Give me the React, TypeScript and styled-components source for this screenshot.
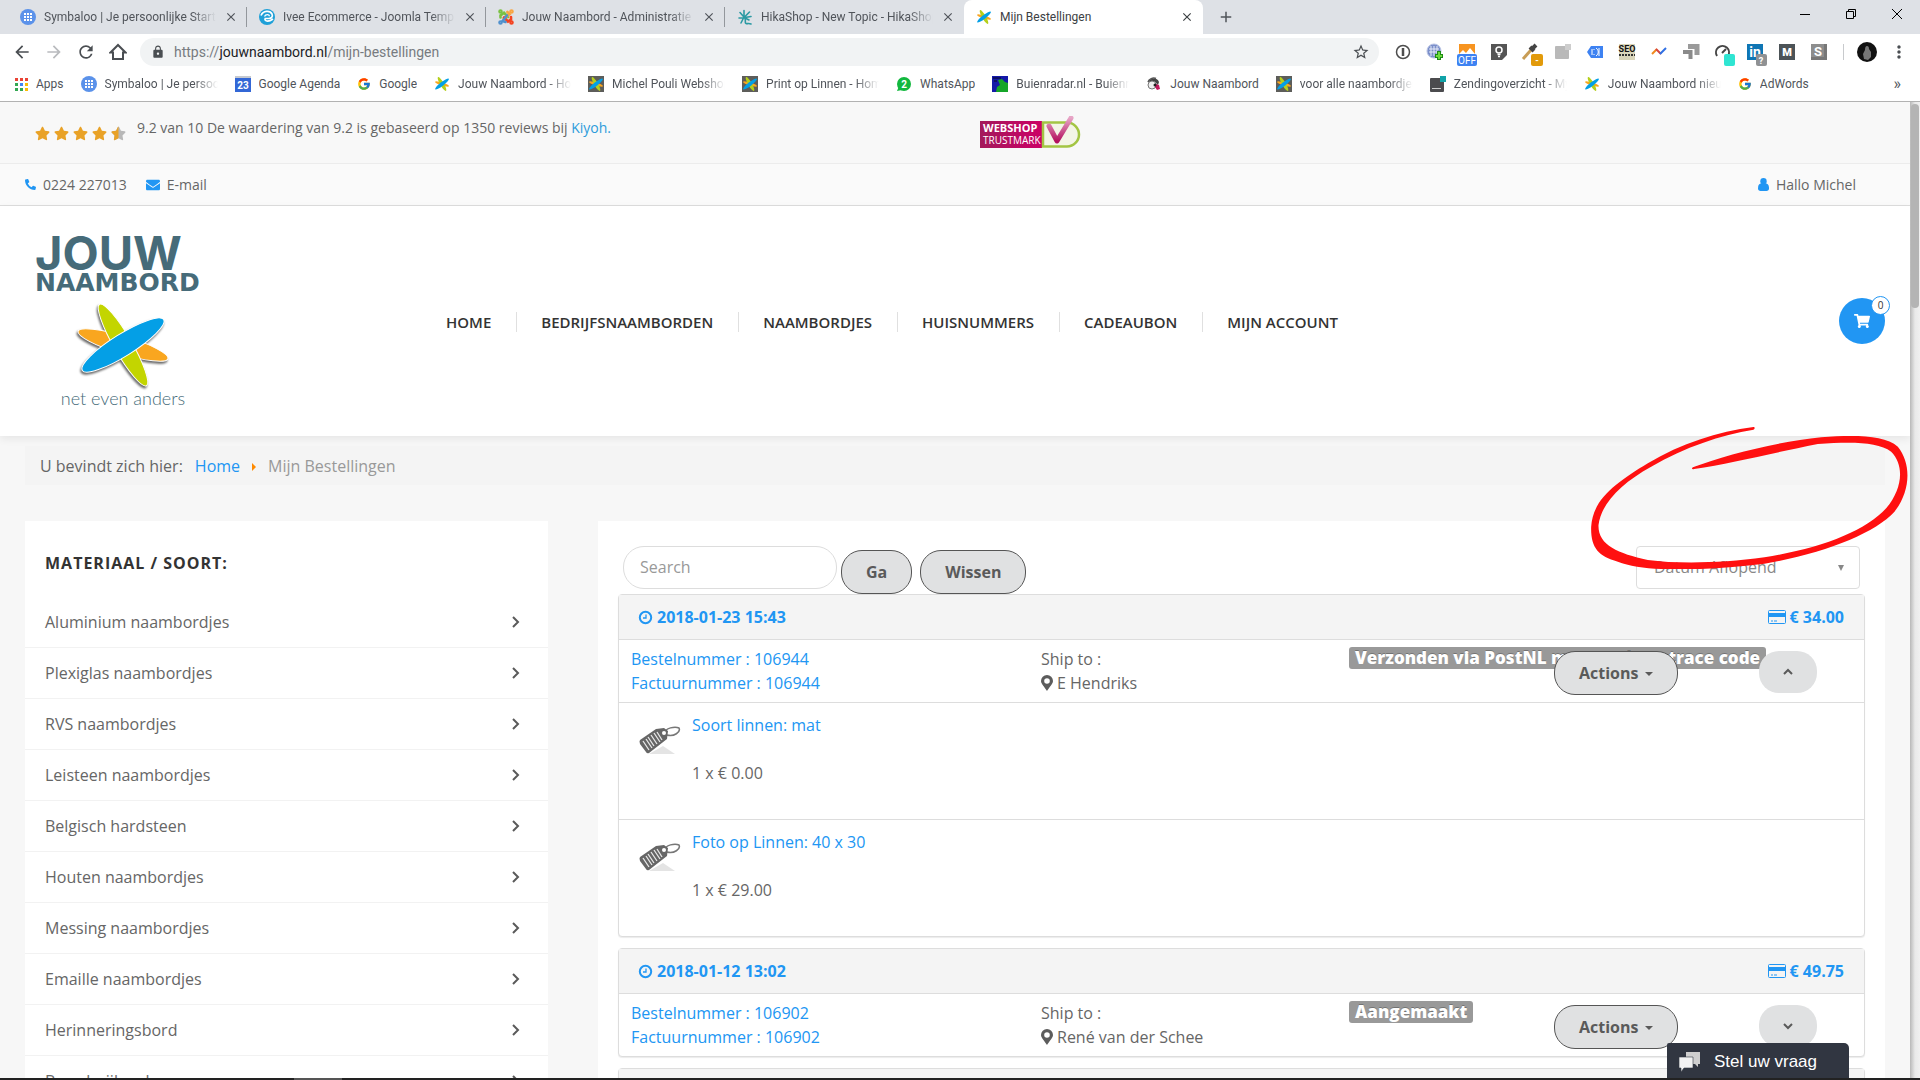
import React from 'react';
import styled, { createGlobalStyle } from 'styled-components';
import {
  MdAdd,
  MdArrowBack,
  MdArrowForward,
  MdClose,
  MdLock,
  MdMoreVert,
  MdRefresh,
  MdStarBorder,
} from 'react-icons/md';
import { FcGoogle } from 'react-icons/fc';
import { FaEnvelope, FaPhoneAlt, FaShoppingCart, FaStar, FaStarHalf } from 'react-icons/fa';

const blue = '#2196f3';
const line = '#dddddd';
const siteFont = '"Open Sans", "Noto Sans", sans-serif';
const chromeFont = 'Roboto, "Open Sans", sans-serif';

const Global = createGlobalStyle`
  *, *::before, *::after { box-sizing: border-box; }
  body { margin: 0; background: #f7f7f7; }
  a { color: inherit; text-decoration: none; }
  button, input, select { font: inherit; color: inherit; margin: 0; }
  button { cursor: pointer; }
  ul { list-style: none; margin: 0; padding: 0; }
  p, h1, h2, h3 { margin: 0; }
  svg { display: block; flex: none; }
`;

/* ---------- Browser window ---------- */

const Window = styled.div`
  display: flex;
  flex-direction: column;
  height: 100vh;
  overflow: hidden;
  font-family: ${siteFont};
  font-size: 16px;
  line-height: 24px;
  color: #666;
`;

const TabStrip = styled.div`
  display: flex;
  flex: none;
  height: 34px;
  padding-left: 8px;
  background: #dee1e6;
  font: 12px/34px ${chromeFont};
  color: #50545a;
`;

const Tab = styled.div<{ $active?: boolean; $divider?: boolean }>`
  display: flex;
  align-items: center;
  gap: 8px;
  width: 239px;
  height: 34px;
  padding: 0 11px 0 12px;
  background: ${(p) => (p.$active ? '#fff' : 'transparent')};
  border-radius: 8px 8px 0 0;
  color: ${(p) => (p.$active ? '#3c4043' : 'inherit')};
  &::after {
    content: '';
    width: 1px;
    height: 20px;
    margin-right: -11px;
    background: ${(p) => (p.$divider ? '#93979c' : 'transparent')};
  }
`;

const Fade = styled.span<{ $fade?: boolean }>`
  overflow: hidden;
  white-space: nowrap;
  ${(p) =>
    p.$fade &&
    'mask-image: linear-gradient(to right, #000 calc(100% - 24px), transparent);'}
`;

const TabTitle = styled(Fade)`
  flex: 1;
`;

const PlainButton = styled.button`
  display: flex;
  align-items: center;
  justify-content: center;
  padding: 0;
  border: 0;
  background: none;
`;

const NewTab = styled(PlainButton)`
  width: 28px;
  margin-left: 9px;
`;

const WindowControls = styled.div`
  display: flex;
  align-items: center;
  gap: 30px;
  height: 28px;
  margin-left: auto;
  padding-right: 15px;
  color: #000;
`;

const Toolbar = styled.div`
  display: flex;
  flex: none;
  align-items: center;
  height: 36px;
  padding: 0 9px 0 12px;
  background: #fff;
  color: #4a4e52;
`;

const NavButtons = styled.div`
  display: flex;
  gap: 12px;
  margin-right: 12px;
`;

const NavButton = styled(PlainButton)<{ $off?: boolean }>`
  width: 20px;
  height: 20px;
  color: ${(p) => (p.$off ? '#b9bbbe' : '#4a4e52')};
`;

const AddressBar = styled.form`
  display: flex;
  flex: 1;
  align-items: center;
  gap: 9px;
  height: 28px;
  padding: 0 9px 0 11px;
  border-radius: 14px;
  background: #f1f3f4;
  font: 14px/28px ${chromeFont};
`;

const Url = styled.label`
  position: relative;
  flex: 1;
  color: #777b80;
  b {
    font-weight: 400;
    color: #202124;
  }
`;

const UrlInput = styled.input`
  position: absolute;
  inset: 0;
  width: 100%;
  border: 0;
  background: none;
  color: transparent;
`;

const Extensions = styled.div`
  display: flex;
  align-items: center;
  gap: 8px;
  margin: 0 0 0 12px;
`;

const Divider = styled.span`
  width: 1px;
  height: 16px;
  margin: 0 3px 0 4px;
  background: #c8cacd;
`;

const ExtensionButton = styled(PlainButton)`
  width: 24px;
  height: 28px;
`;

const Bookmarks = styled.nav`
  display: flex;
  flex: none;
  align-items: center;
  gap: 17px;
  height: 32px;
  padding: 0 19px 3px 12px;
  background: #fff;
  border-bottom: 1px solid #b2b2b2;
  font: 12px/28px ${chromeFont};
  color: #50545a;
`;

const Bookmark = styled.a`
  display: flex;
  align-items: center;
  gap: 8px;
  ${Fade} {
    max-width: 113px;
  }
`;

const More = styled(PlainButton)`
  margin-left: auto;
  font-size: 16px;
`;

/* ---------- Page ---------- */

const Viewport = styled.div`
  display: flex;
  flex: 1;
  min-height: 0;
  overflow: hidden;
`;

const Page = styled.div`
  flex: 1;
  min-width: 0;
  background: #f7f7f7;
`;

const ScrollTrack = styled.div`
  width: 10px;
  padding: 2px 1px;
  background: linear-gradient(to right, #b8b8b8, #e9e9e9 50%, #f0f0f0);
`;

const ScrollThumb = styled.div`
  height: 204px;
  border-radius: 4px;
  background: #b4b4b4;
`;

const BottomEdge = styled.div`
  flex: none;
  height: 2px;
  background: linear-gradient(to right, #222 294px, #555 294px, #555 342px, #222 342px);
`;

const ReviewBar = styled.div`
  display: grid;
  grid-template-columns: 945px 1fr;
  height: 62px;
  padding: 0 35px;
  background: #f8f8f8;
  border-bottom: 1px solid #ececec;
  font-size: 14px;
`;

const Rating = styled.div`
  display: flex;
  gap: 11px;
  padding-top: 14px;
  a {
    color: #2d9cdb;
  }
`;

const Stars = styled.span`
  display: flex;
  gap: 4px;
  height: 34px;
  align-items: center;
  color: #e9a227;
`;

const HalfStar = styled.span`
  display: grid;
  color: #b8b8b8;
  svg {
    grid-area: 1 / 1;
  }
  svg + svg {
    color: #e9a227;
  }
`;

const ContactBar = styled.div`
  display: flex;
  align-items: center;
  gap: 19px;
  height: 42px;
  padding: 0 54px 0 25px;
  background: #fafafa;
  border-bottom: 1px solid ${line};
  font-size: 14px;
`;

const Contact = styled.a<{ $end?: boolean }>`
  display: flex;
  align-items: center;
  gap: 7px;
  margin-left: ${(p) => (p.$end ? 'auto' : '0')};
  svg {
    color: ${blue};
  }
`;

const Header = styled.header`
  display: grid;
  grid-template-columns: 387px 1fr auto;
  align-items: center;
  height: 230px;
  padding: 0 25px 0 35px;
  background: #fff;
  box-shadow: 0 3px 8px rgba(0, 0, 0, 0.07);
`;

const Menu = styled.ul`
  display: flex;
  padding-top: 2px;
  font-size: 15px;
  line-height: 20px;
  font-weight: 600;
  color: #333;
  li {
    padding: 0 25px 0 24px;
  }
  li + li {
    border-left: 1px solid #e0e0e0;
  }
`;

const CartButton = styled.button`
  position: relative;
  display: flex;
  align-items: center;
  justify-content: center;
  width: 46px;
  height: 46px;
  padding: 0;
  border: 0;
  border-radius: 50%;
  background: ${blue};
  color: #fff;
`;

const CartCount = styled.span`
  position: absolute;
  top: -2px;
  right: -5px;
  width: 19px;
  height: 19px;
  border: 1px solid ${blue};
  border-radius: 50%;
  background: #fff;
  color: #333;
  font-size: 10px;
  line-height: 17px;
  text-align: center;
`;

const Content = styled.main`
  padding: 10px 25px 0;
`;

const Breadcrumb = styled.nav`
  display: flex;
  align-items: center;
  gap: 12px;
  height: 39px;
  padding: 0 15px;
  background: #f4f4f4;
  color: #999;
  span {
    color: #666;
  }
  a {
    color: ${blue};
  }
`;

const Columns = styled.div`
  display: grid;
  grid-template-columns: 523fr 1287fr;
  gap: 50px;
  margin-top: 36px;
`;

const Sidebar = styled.aside`
  background: #fff;
  padding-top: 30px;
`;

const SidebarTitle = styled.h3`
  padding: 0 20px;
  margin-bottom: 22px;
  font-size: 16px;
  line-height: 24px;
  font-weight: 700;
  letter-spacing: 1px;
  color: #333;
`;

const Category = styled.a`
  display: flex;
  align-items: center;
  justify-content: space-between;
  height: 51px;
  padding: 0 26px 0 20px;
  border-bottom: 1px solid #f2f2f2;
`;

const Orders = styled.section`
  position: relative;
  padding: 25px 20px 0;
  background: #fff;
`;

const Filters = styled.form`
  display: flex;
  align-items: flex-start;
  height: 48px;
  padding: 0 5px;
`;

const SearchInput = styled.input`
  width: 214px;
  height: 43px;
  margin-right: 4px;
  padding: 0 16px 2px;
  border: 1px solid ${line};
  border-radius: 21px;
  background: #fff;
  &::placeholder {
    color: #999;
    opacity: 1;
  }
`;

const PillButton = styled.button`
  height: 44px;
  margin: 4px 8px 0 0;
  padding: 0 24px;
  border: 1px solid #555;
  border-radius: 21px;
  background: #e0e1e2;
  color: #5a5a5a;
  font-weight: 700;
  white-space: nowrap;
`;

const SortSelect = styled.select`
  width: 224px;
  height: 43px;
  padding: 0 17px 2px;
  appearance: none;
  border: 1px solid ${line};
  border-radius: 4px;
  background: #fff;
  color: #888;
`;

const SortField = styled.div`
  display: grid;
  align-items: center;
  margin-left: auto;
  > * {
    grid-area: 1 / 1;
  }
  svg {
    justify-self: end;
    margin-right: 15px;
    pointer-events: none;
  }
`;

const OrderCard = styled.article`
  margin-bottom: 11px;
  border: 1px solid ${line};
  border-radius: 4px;
  box-shadow: 0 1px 1px rgba(0, 0, 0, 0.08);
  background: #fff;
`;

const OrderHead = styled.header`
  display: flex;
  align-items: center;
  justify-content: space-between;
  height: 45px;
  padding: 0 20px 0 19px;
  border-bottom: 1px solid ${line};
  background: #f4f4f4;
  color: ${blue};
  font-weight: 700;
`;

const IconText = styled.span`
  display: flex;
  align-items: center;
  gap: 4px;
`;

const OrderInfo = styled.div`
  display: grid;
  grid-template-columns: 410px 308px 205px 205px 1fr;
  padding: 7px 0 6px 12px;
  height: 62px;
`;

const OrderLinks = styled.div`
  display: flex;
  flex-direction: column;
  color: ${blue};
`;

const Status = styled.span`
  justify-self: start;
  align-self: start;
  padding: 0 6px;
  border-radius: 3px;
  background: #999;
  color: #fff;
  font-size: 17px;
  line-height: 22px;
  font-weight: 800;
  white-space: nowrap;
  text-shadow: 0 -1px 0 rgba(0, 0, 0, 0.25);
`;

const ActionsButton = styled(PillButton)`
  display: flex;
  align-items: center;
  gap: 7px;
  position: relative;
  justify-self: start;
`;

const ToggleButton = styled.button`
  position: relative;
  display: flex;
  align-items: center;
  justify-content: center;
  width: 58px;
  height: 42px;
  margin-top: 4px;
  padding: 0;
  border: 0;
  border-radius: 20px;
  background: #e0e1e2;
  color: #5a5a5a;
`;

const Product = styled.div`
  display: flex;
  gap: 11px;
  height: 117px;
  padding: 10px 20px;
  border-top: 1px solid ${line};
`;

const ProductText = styled.div`
  display: flex;
  flex-direction: column;
  gap: 24px;
  a {
    color: ${blue};
  }
`;

const Chat = styled.button`
  position: absolute;
  right: 71px;
  bottom: 2px;
  display: flex;
  align-items: center;
  gap: 14px;
  width: 182px;
  height: 35px;
  padding: 3px 12px 0;
  border: 0;
  border-radius: 2px 5px 0 0;
  background: #313641;
  color: #fff;
  font: 17px/32px "Liberation Sans", Arial, sans-serif;
`;

const Marker = styled.svg`
  position: absolute;
  top: -96px;
  right: -23px;
  pointer-events: none;
`;

const HiddenLabel = styled.label`
  position: absolute;
  width: 1px;
  height: 1px;
  overflow: hidden;
  clip-path: inset(50%);
`;

/* ---------- Drawings ---------- */

const Leaves = () => (
  <g stroke="#fff" strokeWidth="1">
    <ellipse cx="50" cy="45" rx="47" ry="9" fill="#f9a61f" transform="rotate(17 50 45)" />
    <ellipse cx="50" cy="45" rx="47" ry="9" fill="#c3d500" transform="rotate(60 50 45)" />
    <ellipse cx="50" cy="45" rx="48" ry="11" fill="#049fe6" transform="rotate(-32 50 45)" />
  </g>
);

const Flower = ({ dark }: { dark?: boolean }) => (
  <svg width="16" height="16" viewBox="0 0 100 100">
    {dark && <rect width="100" height="100" fill="#5d5d5a" />}
    <ellipse cx="50" cy="50" rx="46" ry="10" fill="#f9a61f" transform="rotate(17 50 50)" />
    <ellipse cx="50" cy="50" rx="50" ry="12" fill="#b5cf1c" transform="rotate(60 50 50)" />
    <ellipse cx="50" cy="50" rx="54" ry="12" fill="#049fe6" transform="rotate(-38 50 50)" />
  </svg>
);

const Symbaloo = () => (
  <svg width="16" height="16" viewBox="0 0 16 16">
    <circle cx="8" cy="8" r="8" fill="#5b92ea" />
    {[4, 7, 10].map((x) =>
      [4, 7, 10].map((y) => <rect key={`${x}-${y}`} x={x} y={y} width="2" height="2" fill="#fff" />),
    )}
  </svg>
);

const Swirl = () => (
  <svg width="16" height="16" viewBox="0 0 16 16">
    <circle cx="8" cy="8" r="8" fill="#1ea0d8" />
    <path d="M2 6.500c2-5 9-5.500 11-1.500 1.300 3-1 4.700-3.500 4.500H6.200C5 12 9 13.500 14 10" fill="none" stroke="#fff" strokeWidth="1.700" />
    <path d="M5.500 7.500c1-2.500 5-2.500 4.800-.2" fill="none" stroke="#fff" strokeWidth="1.300" />
  </svg>
);

const Joomla = () => (
  <svg width="16" height="16" viewBox="0 0 16 16" fill="none" strokeWidth="2.600" strokeLinecap="round">
    <path d="M2.500 8.500V6.500L6 3.800 10 8" stroke="#7ac143" />
    <path d="M8.500 2.800 11 4.500 6 10" stroke="#f9a541" transform="rotate(10 8 8)" />
    <path d="M13 8v2.500L10 12.500 6 8.500" stroke="#f44321" />
    <path d="M7.500 13 4.500 12 9 6.500" stroke="#5091cd" />
    <circle cx="2.500" cy="2.500" r="1" stroke="#7ac143" />
    <circle cx="13.500" cy="2.500" r="1" stroke="#f9a541" />
    <circle cx="13.500" cy="13.500" r="1" stroke="#f44321" />
    <circle cx="2.500" cy="13.500" r="1" stroke="#5091cd" />
  </svg>
);

const Hika = () => (
  <svg width="16" height="16" viewBox="0 0 16 16" fill="none" stroke="#2b9aa3" strokeWidth="1.600" strokeLinecap="round">
    <path d="M7 1.500v6M3 3.500l3.500 4M12.500 3 8 7.500M2 9h5M14 7.500 8 8.500M6.500 9 4 14M8 9c1 4-.5 5 1 5.500s2.500-.5 5 .5M9 9.500l3 1.500" />
  </svg>
);

const AppsGrid = () => (
  <svg width="16" height="16" viewBox="0 0 16 16">
    {['#ea4335', '#ea4335', '#ea4335', '#34a853', '#4285f4', '#fbbc05', '#34a853', '#34a853', '#fbbc05'].map((c, i) => (
      <rect key={i} x={3 + (i % 3) * 5} y={2 + Math.floor(i / 3) * 5} width="3" height="3" fill={c} />
    ))}
  </svg>
);

const Agenda = () => (
  <svg width="16" height="16" viewBox="0 0 16 16">
    <rect width="16" height="4" fill="#c5c9d0" />
    <rect y="2" width="16" height="14" fill="#3367d6" />
    <text x="8" y="13" textAnchor="middle" fontSize="10" fontWeight="700" fontFamily="Roboto, sans-serif" fill="#fff">23</text>
  </svg>
);

const WhatsApp = () => (
  <svg width="16" height="16" viewBox="0 0 16 16">
    <circle cx="8" cy="8" r="7" fill="#12b83e" />
    <path d="M1 15l2-5 3 4z" fill="#12b83e" />
    <text x="8" y="12" textAnchor="middle" fontSize="10" fontWeight="700" fontFamily="Roboto, sans-serif" fill="#fff">2</text>
  </svg>
);

const Radar = () => (
  <svg width="16" height="16" viewBox="0 0 16 16">
    <rect width="16" height="16" fill="#1419a8" />
    <path d="M6 4l4-1 3 3 3 1v9H4l1-5 3-2z" fill="#16a629" />
    <path d="M1 2h8M2 5h3" stroke="#0a0c50" strokeWidth="1.500" />
  </svg>
);

const Figure = () => (
  <svg width="16" height="16" viewBox="0 0 16 16">
    <path d="M2 6c2-4 9-5 11 0l-1 3-3-3z" fill="#444" />
    <circle cx="6" cy="9" r="4" fill="#eee" stroke="#777" />
    <path d="M10 8l3 1 1 4-3 1-2-3z" fill="#c2185b" />
    <circle cx="9" cy="9" r="1.500" fill="#222" />
    <path d="M2 6c1-3 5-5 8-3.500" fill="none" stroke="#555" strokeWidth="1.500" />
  </svg>
);

const Parcel = () => (
  <svg width="16" height="16" viewBox="0 0 16 16">
    <rect x="0" y="2" width="14" height="14" rx="1" fill="#4b4b4e" />
    <rect x="2" y="12" width="9" height="1" fill="#ccc" />
    <rect x="10" y="0" width="6" height="6" fill="#11a3a8" />
  </svg>
);

const HomeOutline = () => (
  <svg width="18" height="18" viewBox="0 0 18 18" fill="none" stroke="currentColor" strokeWidth="2">
    <path d="M1.500 9.500 9 2l7.500 7.500H14V16H4V9.500z" />
  </svg>
);

const SquareBase = ({ fill, children }: { fill: string; children?: React.ReactNode }) => (
  <svg width="24" height="28" viewBox="0 0 24 28">
    <rect x="4" y="6" width="16" height="16" fill={fill} />
    {children}
  </svg>
);

const glyph = { fontFamily: 'Roboto, sans-serif', fontWeight: 700, textAnchor: 'middle' as const, fill: '#fff' };

const extensions: { name: string; icon: React.ReactNode }[] = [
  {
    name: 'Wachtwoorden',
    icon: (
      <svg width="24" height="28" viewBox="0 0 24 28" fill="none" stroke="#4d4d4d" strokeWidth="1.500">
        <circle cx="12" cy="14" r="6.500" />
        <path d="M12 10v8" strokeWidth="2.500" />
      </svg>
    ),
  },
  {
    name: 'Symbaloo toevoegen',
    icon: (
      <svg width="24" height="28" viewBox="0 0 24 28">
        <circle cx="11" cy="13" r="7" fill="#7b8fca" stroke="#b8c3e4" />
        <path d="M8 8v10M11 8v10M14 8v10M6 11h10M6 14h10" stroke="#e8ecf8" />
        <path d="M16 13v9M12 18h8" stroke="#1d8a17" strokeWidth="4" />
        <path d="M16 14v7M13 18h6" stroke="#6ddb3c" strokeWidth="2" />
      </svg>
    ),
  },
  {
    name: 'Afbeeldingen uit',
    icon: (
      <svg width="24" height="28" viewBox="0 0 24 28">
        <rect x="4" y="6" width="16" height="11" fill="#f79420" />
        <path d="M4 16l4-4 3 3 4-5 5 6z" fill="#fff" />
        <rect x="2" y="16" width="20" height="12" rx="2" fill="#3d82f2" />
        <text x="12" y="26" fontSize="10" {...glyph} fontWeight={400}>OFF</text>
      </svg>
    ),
  },
  {
    name: 'Notities',
    icon: (
      <SquareBase fill="#555">
        <circle cx="12" cy="12" r="3" fill="none" stroke="#fff" strokeWidth="1.500" />
        <path d="M10.500 16.500h3M11 18.500h2" stroke="#fff" strokeWidth="1.500" />
        <path d="M20 17v5h-5z" fill="#fff" />
      </SquareBase>
    ),
  },
  {
    name: 'Kleurkiezer',
    icon: (
      <svg width="24" height="28" viewBox="0 0 24 28">
        <path d="M4 21l8-9" stroke="#c89d56" strokeWidth="3" />
        <path d="M11 9l4 4M12 12l5-5" stroke="#444" strokeWidth="4" />
        <rect x="12" y="16" width="12" height="12" rx="2" fill="#e29a0a" />
        <text x="18" y="25" fontSize="9" {...glyph}>-</text>
      </svg>
    ),
  },
  {
    name: 'Pakket',
    icon: (
      <svg width="24" height="28" viewBox="0 0 24 28">
        <rect x="4" y="8" width="14" height="13" rx="1" fill="#b9b9b9" />
        <rect x="14" y="6" width="6" height="6" fill="#cdcdcd" />
      </svg>
    ),
  },
  {
    name: 'Label',
    icon: (
      <svg width="24" height="28" viewBox="0 0 24 28">
        <path d="M4 14l4-6h12v12H8l-4-6z" fill="#3d82f2" />
        <path d="M9 11v6M11 11v1M11 16v1M13 10c3 2 3 6 0 8M16 10v8" stroke="#fff" fill="none" />
      </svg>
    ),
  },
  {
    name: 'SEO',
    icon: (
      <SquareBase fill="#d9d5ba">
        <text x="12" y="14" fontSize="9" {...glyph} fill="#111">SEO</text>
        <path d="M4 17h16" stroke="#333" strokeWidth="2" strokeDasharray="2 1" />
      </SquareBase>
    ),
  },
  {
    name: 'Statistiek',
    icon: (
      <svg width="24" height="28" viewBox="0 0 24 28" fill="none" strokeWidth="2">
        <path d="M5 16l5-5" stroke="#f08a1d" />
        <path d="M9 11l5 5" stroke="#d8453f" />
        <path d="M13 16l6-6" stroke="#2f6fe4" />
      </svg>
    ),
  },
  {
    name: 'Tag assistent',
    icon: (
      <svg width="24" height="28" viewBox="0 0 24 28" fill="none" stroke="#9a9a9a" strokeWidth="5">
        <path d="M9 8.500h9V17" />
        <path d="M4 14h7.500v7" strokeWidth="4" stroke="#8a8a8a" />
      </svg>
    ),
  },
  {
    name: 'Snelheid',
    icon: (
      <svg width="24" height="28" viewBox="0 0 24 28">
        <path d="M6 18a6.500 6.500 0 1 1 11 0" fill="none" stroke="#444" strokeWidth="2" />
        <path d="M11 15l4-4" stroke="#444" strokeWidth="2" />
        <rect x="13" y="16" width="11" height="12" rx="2" fill="#2fe5d2" />
      </svg>
    ),
  },
  {
    name: 'LinkedIn',
    icon: (
      <SquareBase fill="#0f76b4">
        <text x="12" y="19" fontSize="14" {...glyph}>in</text>
        <rect x="13" y="16" width="11" height="12" rx="2" fill="#8f9193" />
        <text x="18" y="26" fontSize="9" {...glyph}>?</text>
      </SquareBase>
    ),
  },
  {
    name: 'Mail',
    icon: (
      <SquareBase fill="#4c5357">
        <text x="12" y="18" fontSize="11" {...glyph} fontWeight={900}>M</text>
      </SquareBase>
    ),
  },
  {
    name: 'Stylish',
    icon: (
      <SquareBase fill="#777">
        <rect x="4" y="6" width="13" height="13" fill="#8d8d8d" />
        <text x="11" y="18" fontSize="13" {...glyph}>S</text>
      </SquareBase>
    ),
  },
];

const Trustmark = () => (
  <svg width="102" height="34" viewBox="0 0 102 34" role="img" aria-label="Webshop Trustmark">
    <defs>
      <linearGradient id="tm" x1="0" x2="1">
        <stop offset="0" stopColor="#a3195b" />
        <stop offset="1" stopColor="#cc0066" />
      </linearGradient>
      <linearGradient id="tick" x1="0" y1="1" x2="0" y2="0">
        <stop offset="0" stopColor="#b3125e" />
        <stop offset="1" stopColor="#e7a5c6" />
      </linearGradient>
    </defs>
    <rect y="5" width="62" height="27" fill="url(#tm)" />
    <path d="M63 6.500h24a12 12 0 0 1 0 24H63z" fill="#f3f5e6" stroke="#a3c543" strokeWidth="2.500" />
    <path d="M69 10l8 15L91 2" fill="none" stroke="url(#tick)" strokeWidth="5" strokeLinejoin="round" strokeLinecap="round" />
    <text x="3" y="16" fontFamily="Open Sans, sans-serif" fontWeight="700" fontSize="11" fill="#fff">WEBSHOP</text>
    <text x="3" y="28" fontFamily="Open Sans, sans-serif" fontSize="10" fill="#fff">TRUSTMARK</text>
  </svg>
);

const Logo = () => (
  <svg width="178" height="168" viewBox="0 0 178 168" overflow="visible" role="img" aria-label="Jouw Naambord">
    <g fill="#466b79" fontWeight="700">
      <text y="33" fontSize="47" fontFamily="Inter, sans-serif">JOUW</text>
      <text y="54" fontSize="25" fontFamily="DejaVu Sans, sans-serif">NAAMBORD</text>
    </g>
    <g transform="translate(38 63)" filter="drop-shadow(-1px 2px 1px rgba(0,0,0,.6))">
      <Leaves />
    </g>
    <text x="88" y="168" textAnchor="middle" fontFamily="Lato, sans-serif" fontSize="18" fontWeight="300" fill="#466b79">
      net even anders
    </text>
  </svg>
);

const UserIcon = () => (
  <svg width="11" height="13" viewBox="0 0 11 13" fill="currentColor">
    <circle cx="5.500" cy="3.300" r="3.200" />
    <path d="M2.500 5.500h6C10.500 6 11 8 11 10.500c0 1.500-1 2.500-2.500 2.500h-6C1 13 0 12 0 10.500 0 8 .5 6 2.500 5.500z" />
  </svg>
);

const ClockIcon = () => (
  <svg width="15" height="15" viewBox="0 0 15 15" fill="none" stroke="currentColor">
    <circle cx="7.500" cy="7.500" r="5.700" strokeWidth="2" />
    <path d="M8 4.500V8H5" strokeWidth="1.300" />
  </svg>
);

const PinIcon = () => (
  <svg width="12" height="16" viewBox="0 0 12 16" fill="#5c5c5c">
    <path d="M6 0a6 6 0 0 1 6 6c0 3-4 6.500-6 10C4 12.500 0 9 0 6a6 6 0 0 1 6-6zm0 3.200a2.800 2.800 0 1 0 0 5.600 2.800 2.800 0 0 0 0-5.600z" fillRule="evenodd" />
  </svg>
);

const CardIcon = () => (
  <svg width="18" height="14" viewBox="0 0 18 14">
    <rect x=".5" y=".5" width="17" height="13" rx="1" fill="none" stroke="currentColor" />
    <path d="M0 3h18v4H0z" fill="currentColor" />
    <path d="M3 11h2M6 11h3" stroke="currentColor" />
  </svg>
);

const chevrons = { right: 'M3 1l5 5-5 5', up: 'M2 8l4-4 4 4', down: 'M2 4l4 4 4-4' };
const Chevron = ({ to }: { to: keyof typeof chevrons }) => (
  <svg width="12" height="12" viewBox="0 0 12 12" fill="none" stroke="#5a5a5a" strokeWidth="2">
    <path d={chevrons[to]} />
  </svg>
);

const Triangle = ({ fill, tall }: { fill: string; tall?: boolean }) => (
  <svg width="8" height="8" viewBox="0 0 8 8">
    <path d={tall ? 'M1 1h6L4 7z' : 'M0 3h8L4 7z'} fill={fill} />
  </svg>
);

const TagIcon = () => (
  <svg width="42" height="54" viewBox="0 0 42 54">
    <path d="M10 41h26l-12-8z" fill="#e4e4e4" />
    <path d="M26 20c0-5 10-7 14-5 2 4-5 9-12 7" fill="none" stroke="#777" strokeWidth="1.500" />
    <path d="M1 27 17 16l8-1 4 3-1 8-18 14q-2 1-3-1L1 31q-1-3 0-4z" fill="#666" />
    <path d="M4 28l6 9M7 26l6 9M9 24l6 9M12 22l6 9M15 20l6 9M18 19l5 8" stroke="#e9e9e9" strokeWidth="1.300" />
    <circle cx="25" cy="20" r="2" fill="#fff" />
  </svg>
);

const ChatIcon = () => (
  <svg width="21" height="20" viewBox="0 0 21 20" fill="#f2f2f2">
    <path d="M7 0h14v12h-2v3l-3-3H7z" fill="#cfcfcf" />
    <path d="M0 5h14v11H5l-3 4v-4H0z" stroke="#313641" strokeWidth=".6" />
  </svg>
);

const markerPath =
  'M487 161 C380 175 270 210 170 270 C80 325 5 375 0 460 C-2 520 20 550 80 565 ' +
  'C170 600 360 590 520 571 C700 540 850 480 910 415 C960 350 960 270 920 220 ' +
  'C880 185 790 185 690 192 C560 205 400 245 305 282 C300 286 303 289 309 287 ' +
  'C420 270 540 240 680 212 C780 205 860 205 900 235 C940 275 935 345 885 405 ' +
  'C820 475 690 525 520 552 C390 570 260 572 170 560 C80 540 20 515 22 455 ' +
  'C30 390 90 330 180 280 C280 222 390 184 487 169 C492 167 491 160 487 161 Z';

/* ---------- Data ---------- */

const tabs = [
  { title: 'Symbaloo | Je persoonlijke Startp', icon: <Symbaloo />, divider: true },
  { title: 'Ivee Ecommerce - Joomla Templa', icon: <Swirl />, divider: true },
  { title: 'Jouw Naambord - Administratie -', icon: <Joomla />, divider: true },
  { title: 'HikaShop - New Topic - HikaShop', icon: <Hika /> },
  { title: 'Mijn Bestellingen', icon: <Flower />, active: true },
];

const bookmarks = [
  { title: 'Apps', icon: <AppsGrid /> },
  { title: 'Symbaloo | Je persoon', icon: <Symbaloo />, fade: true },
  { title: 'Google Agenda', icon: <Agenda /> },
  { title: 'Google', icon: <FcGoogle size={14} /> },
  { title: 'Jouw Naambord - Ho', icon: <Flower />, fade: true },
  { title: 'Michel Pouli Webshop', icon: <Flower dark />, fade: true },
  { title: 'Print op Linnen - Hom', icon: <Flower dark />, fade: true },
  { title: 'WhatsApp', icon: <WhatsApp /> },
  { title: 'Buienradar.nl - Buienr', icon: <Radar />, fade: true },
  { title: 'Jouw Naambord', icon: <Figure /> },
  { title: 'voor alle naambordjes', icon: <Flower dark />, fade: true },
  { title: 'Zendingoverzicht - My', icon: <Parcel />, fade: true },
  { title: 'Jouw Naambord nieuw', icon: <Flower />, fade: true },
  { title: 'AdWords', icon: <FcGoogle size={14} /> },
];

const menu = ['HOME', 'BEDRIJFSNAAMBORDEN', 'NAAMBORDJES', 'HUISNUMMERS', 'CADEAUBON', 'MIJN ACCOUNT'];

const categories = [
  'Aluminium naambordjes',
  'Plexiglas naambordjes',
  'RVS naambordjes',
  'Leisteen naambordjes',
  'Belgisch hardsteen',
  'Houten naambordjes',
  'Messing naambordjes',
  'Emaille naambordjes',
  'Herinneringsbord',
  'Boerderijborden',
];

type Order = {
  date: string;
  total: string;
  number: string;
  shipTo: string;
  status: string;
  products: { name: string; price: string }[];
};

const orders: Order[] = [
  {
    date: '2018-01-23 15:43',
    total: '€ 34.00',
    number: '106944',
    shipTo: 'E Hendriks',
    status: 'Verzonden via PostNL met track en trace code',
    products: [
      { name: 'Soort linnen: mat', price: '1 x € 0.00' },
      { name: 'Foto op Linnen: 40 x 30', price: '1 x € 29.00' },
    ],
  },
  {
    date: '2018-01-12 13:02',
    total: '€ 49.75',
    number: '106902',
    shipTo: 'René van der Schee',
    status: 'Aangemaakt',
    products: [],
  },
];

/* ---------- Components ---------- */

const OrderPanel = ({ order }: { order: Order }) => (
  <OrderCard>
    <OrderHead>
      <IconText>
        <ClockIcon />
        {order.date}
      </IconText>
      <IconText>
        <CardIcon />
        {order.total}
      </IconText>
    </OrderHead>
    <OrderInfo>
      <OrderLinks>
        <a href="#order">Bestelnummer : {order.number}</a>
        <a href="#invoice">Factuurnummer : {order.number}</a>
      </OrderLinks>
      <div>
        <div>Ship to :</div>
        <IconText>
          <PinIcon />
          {order.shipTo}
        </IconText>
      </div>
      <Status>{order.status}</Status>
      <ActionsButton type="button">
        Actions <Triangle fill="#5a5a5a" />
      </ActionsButton>
      <ToggleButton type="button" aria-label="Details">
        <Chevron to={order.products.length ? 'up' : 'down'} />
      </ToggleButton>
    </OrderInfo>
    {order.products.map((product) => (
      <Product key={product.name}>
        <TagIcon />
        <ProductText>
          <a href="#product">{product.name}</a>
          <span>{product.price}</span>
        </ProductText>
      </Product>
    ))}
  </OrderCard>
);

export default function App() {
  return (
    <Window>
      <Global />
      <TabStrip>
        {tabs.map((tab) => (
          <Tab key={tab.title} $active={tab.active} $divider={tab.divider}>
            {tab.icon}
            <TabTitle $fade={!tab.active}>{tab.title}</TabTitle>
            <PlainButton type="button" aria-label="Tabblad sluiten">
              <MdClose size={14} />
            </PlainButton>
          </Tab>
        ))}
        <NewTab type="button" aria-label="Nieuw tabblad">
          <MdAdd size={18} />
        </NewTab>
        <WindowControls>
          <PlainButton type="button" aria-label="Minimaliseren">
            <svg width="16" height="16" viewBox="0 0 16 16" stroke="#000">
              <path d="M3 8.500h10" />
            </svg>
          </PlainButton>
          <PlainButton type="button" aria-label="Herstellen">
            <svg width="16" height="16" viewBox="0 0 16 16" stroke="#000" fill="none">
              <path d="M3.500 5.500h7v7h-7zM5.500 5.500v-2h7v7h-2" />
            </svg>
          </PlainButton>
          <PlainButton type="button" aria-label="Sluiten">
            <svg width="16" height="16" viewBox="0 0 16 16" stroke="#000">
              <path d="M3 3l10 10M13 3L3 13" />
            </svg>
          </PlainButton>
        </WindowControls>
      </TabStrip>

      <Toolbar>
        <NavButtons>
          <NavButton type="button" aria-label="Terug">
            <MdArrowBack size={20} />
          </NavButton>
          <NavButton type="button" aria-label="Vooruit" $off>
            <MdArrowForward size={20} />
          </NavButton>
          <NavButton type="button" aria-label="Vernieuwen">
            <MdRefresh size={20} />
          </NavButton>
          <NavButton type="button" aria-label="Startpagina">
            <HomeOutline />
          </NavButton>
        </NavButtons>
        <AddressBar>
          <MdLock size={14} />
          <Url>
            https://<b>jouwnaambord.nl</b>/mijn-bestellingen
            <UrlInput aria-label="Adres" />
          </Url>
          <PlainButton type="button" aria-label="Bladwijzer">
            <MdStarBorder size={18} />
          </PlainButton>
        </AddressBar>
        <Extensions>
          {extensions.map((ext) => (
            <ExtensionButton key={ext.name} type="button" aria-label={ext.name}>
              {ext.icon}
            </ExtensionButton>
          ))}
          <Divider />
          <ExtensionButton type="button" aria-label="Profiel">
            <svg width="20" height="20" viewBox="0 0 20 20">
              <circle cx="10" cy="10" r="10" fill="#111" />
              <path d="M7 17l-1-5 2-4q0-4 2-4t2 3l2 3v5l-3 3z" fill="#777" />
            </svg>
          </ExtensionButton>
          <ExtensionButton type="button" aria-label="Menu">
            <MdMoreVert size={20} />
          </ExtensionButton>
        </Extensions>
      </Toolbar>

      <Bookmarks>
        {bookmarks.map((mark) => (
          <Bookmark key={mark.title} href="#bookmark">
            {mark.icon}
            <Fade $fade={mark.fade}>{mark.title}</Fade>
          </Bookmark>
        ))}
        <More type="button" aria-label="Meer bladwijzers">»</More>
      </Bookmarks>

      <Viewport>
        <Page>
          <ReviewBar>
            <Rating>
              <Stars>
                <FaStar size={15} />
                <FaStar size={15} />
                <FaStar size={15} />
                <FaStar size={15} />
                <HalfStar>
                  <FaStar size={15} />
                  <FaStarHalf size={15} />
                </HalfStar>
              </Stars>
              <p>
                9.2 van 10 De waardering van 9.2 is gebaseerd op 1350 reviews bij <a href="#kiyoh">Kiyoh.</a>
              </p>
            </Rating>
            <Rating>
              <Trustmark />
            </Rating>
          </ReviewBar>

          <ContactBar>
            <Contact href="#phone">
              <FaPhoneAlt size={11} />
              0224 227013
            </Contact>
            <Contact href="#mail">
              <FaEnvelope size={14} />
              E-mail
            </Contact>
            <Contact href="#account" $end>
              <UserIcon />
              Hallo Michel
            </Contact>
          </ContactBar>

          <Header>
            <Logo />
            <Menu>
              {menu.map((item) => (
                <li key={item}>
                  <a href="#menu">{item}</a>
                </li>
              ))}
            </Menu>
            <CartButton type="button" aria-label="Winkelwagen">
              <FaShoppingCart size={16} />
              <CartCount>0</CartCount>
            </CartButton>
          </Header>

          <Content>
            <Breadcrumb>
              <span>U bevindt zich hier:</span>
              <a href="#home">Home</a>
              <svg width="4" height="8" viewBox="0 0 4 8" overflow="visible">
                <path d="M0 1l4 4-4 4z" fill="#ff8a00" />
              </svg>
              Mijn Bestellingen
            </Breadcrumb>

            <Columns>
              <Sidebar>
                <SidebarTitle>MATERIAAL / SOORT:</SidebarTitle>
                <ul>
                  {categories.map((name) => (
                    <li key={name}>
                      <Category href="#category">
                        {name}
                        <Chevron to="right" />
                      </Category>
                    </li>
                  ))}
                </ul>
              </Sidebar>

              <Orders>
                <Filters>
                  <HiddenLabel htmlFor="search">Zoeken</HiddenLabel>
                  <SearchInput id="search" placeholder="Search" />
                  <PillButton type="button">Ga</PillButton>
                  <PillButton type="button">Wissen</PillButton>
                  <SortField>
                    <SortSelect id="sort" aria-label="Sorteren">
                      <option>Datum Aflopend</option>
                    </SortSelect>
                    <Triangle fill="#888" tall />
                  </SortField>
                </Filters>
                {orders.map((order) => (
                  <OrderPanel key={order.number} order={order} />
                ))}
                <OrderCard>
                  <OrderHead />
                </OrderCard>
                <Marker width="317" height="144" viewBox="0 155 950 432">
                  <path d={markerPath} fill="#ff1010" />
                </Marker>
              </Orders>
            </Columns>
          </Content>
        </Page>
        <ScrollTrack>
          <ScrollThumb />
        </ScrollTrack>
      </Viewport>
      <BottomEdge />
      <Chat type="button">
        <ChatIcon />
        Stel uw vraag
      </Chat>
    </Window>
  );
}
